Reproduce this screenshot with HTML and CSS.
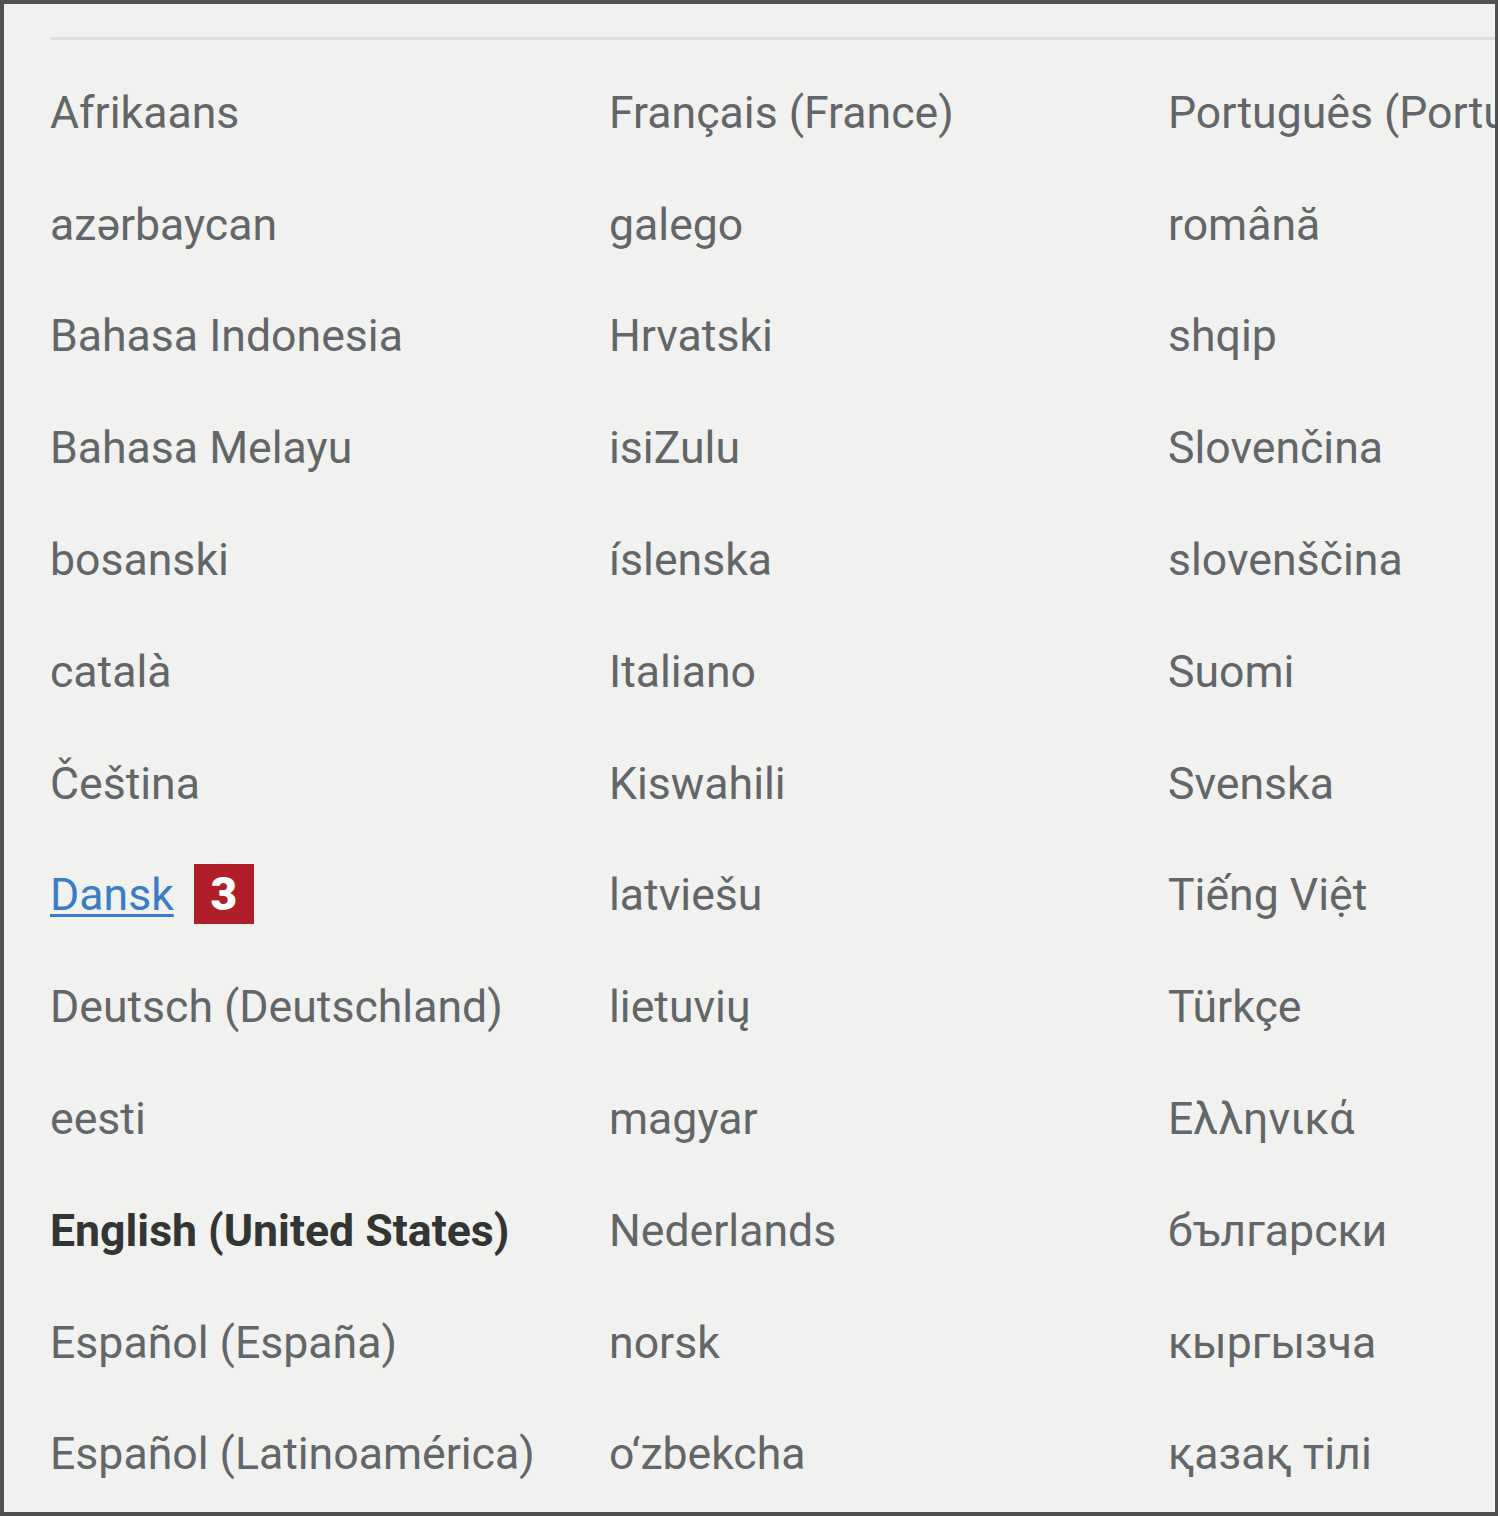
FILE: index.html
```html
<!DOCTYPE html>
<html lang="en">
<head>
    <meta charset="UTF-8">
    <title>Language</title>
    <link rel="stylesheet" href="styles.css">
</head>
<body>
    <div class="frame">
        <div class="divider"></div>
        <ul class="lang-list">
            <li>Afrikaans</li>
            <li>azərbaycan</li>
            <li>Bahasa Indonesia</li>
            <li>Bahasa Melayu</li>
            <li>bosanski</li>
            <li>català</li>
            <li>Čeština</li>
            <li><a href="#" class="lang-link">Dansk</a><span class="badge">3</span></li>
            <li>Deutsch (Deutschland)</li>
            <li>eesti</li>
            <li class="current">English (United States)</li>
            <li>Español (España)</li>
            <li>Español (Latinoamérica)</li>

            <li>Français (France)</li>
            <li>galego</li>
            <li>Hrvatski</li>
            <li>isiZulu</li>
            <li>íslenska</li>
            <li>Italiano</li>
            <li>Kiswahili</li>
            <li>latviešu</li>
            <li>lietuvių</li>
            <li>magyar</li>
            <li>Nederlands</li>
            <li>norsk</li>
            <li>o‘zbekcha</li>

            <li>Português (Portugal)</li>
            <li>română</li>
            <li>shqip</li>
            <li>Slovenčina</li>
            <li>slovenščina</li>
            <li>Suomi</li>
            <li>Svenska</li>
            <li>Tiếng Việt</li>
            <li>Türkçe</li>
            <li>Ελληνικά</li>
            <li>български</li>
            <li>кыргызча</li>
            <li>қазақ тілі</li>
        </ul>
    </div>
</body>
</html>
```

FILE: styles.css
```css
body {
    margin: 0;
    background-color: #ffffff;
    font-family: Roboto, "Liberation Sans", sans-serif;
}
.frame {
    box-sizing: border-box;
    width: 1498px;
    height: 1516px;
    border: 4px solid #4f5251;
    border-right-width: 3px;
    background-color: #f1f1ef;
    padding: 33px 0 0 46px;
    overflow: hidden;
}
.divider {
    height: 3px;
    background-color: #dcdfdd;
}
.lang-list {
    list-style: none;
    margin: 17px 0 0;
    padding: 0;
    display: grid;
    grid-template-columns: repeat(3, 559px);
    grid-template-rows: repeat(13, 111.8px);
    grid-auto-flow: column;
}
.lang-list li {
    display: flex;
    align-items: center;
    font-size: 44.6px;
    color: #626668;
    white-space: nowrap;
}
.lang-list .current {
    font-weight: 700;
    color: #333535;
}
.lang-link {
    color: #3b7cc4;
    text-decoration: underline;
    text-decoration-thickness: 3px;
    text-underline-offset: 4px;
}
.badge {
    display: inline-flex;
    align-items: center;
    justify-content: center;
    width: 60px;
    height: 60px;
    margin-left: 20px;
    margin-top: -2px;
    background-color: #b01e28;
    color: #ffffff;
    font-weight: 900;
    font-size: 46px;
}
```
